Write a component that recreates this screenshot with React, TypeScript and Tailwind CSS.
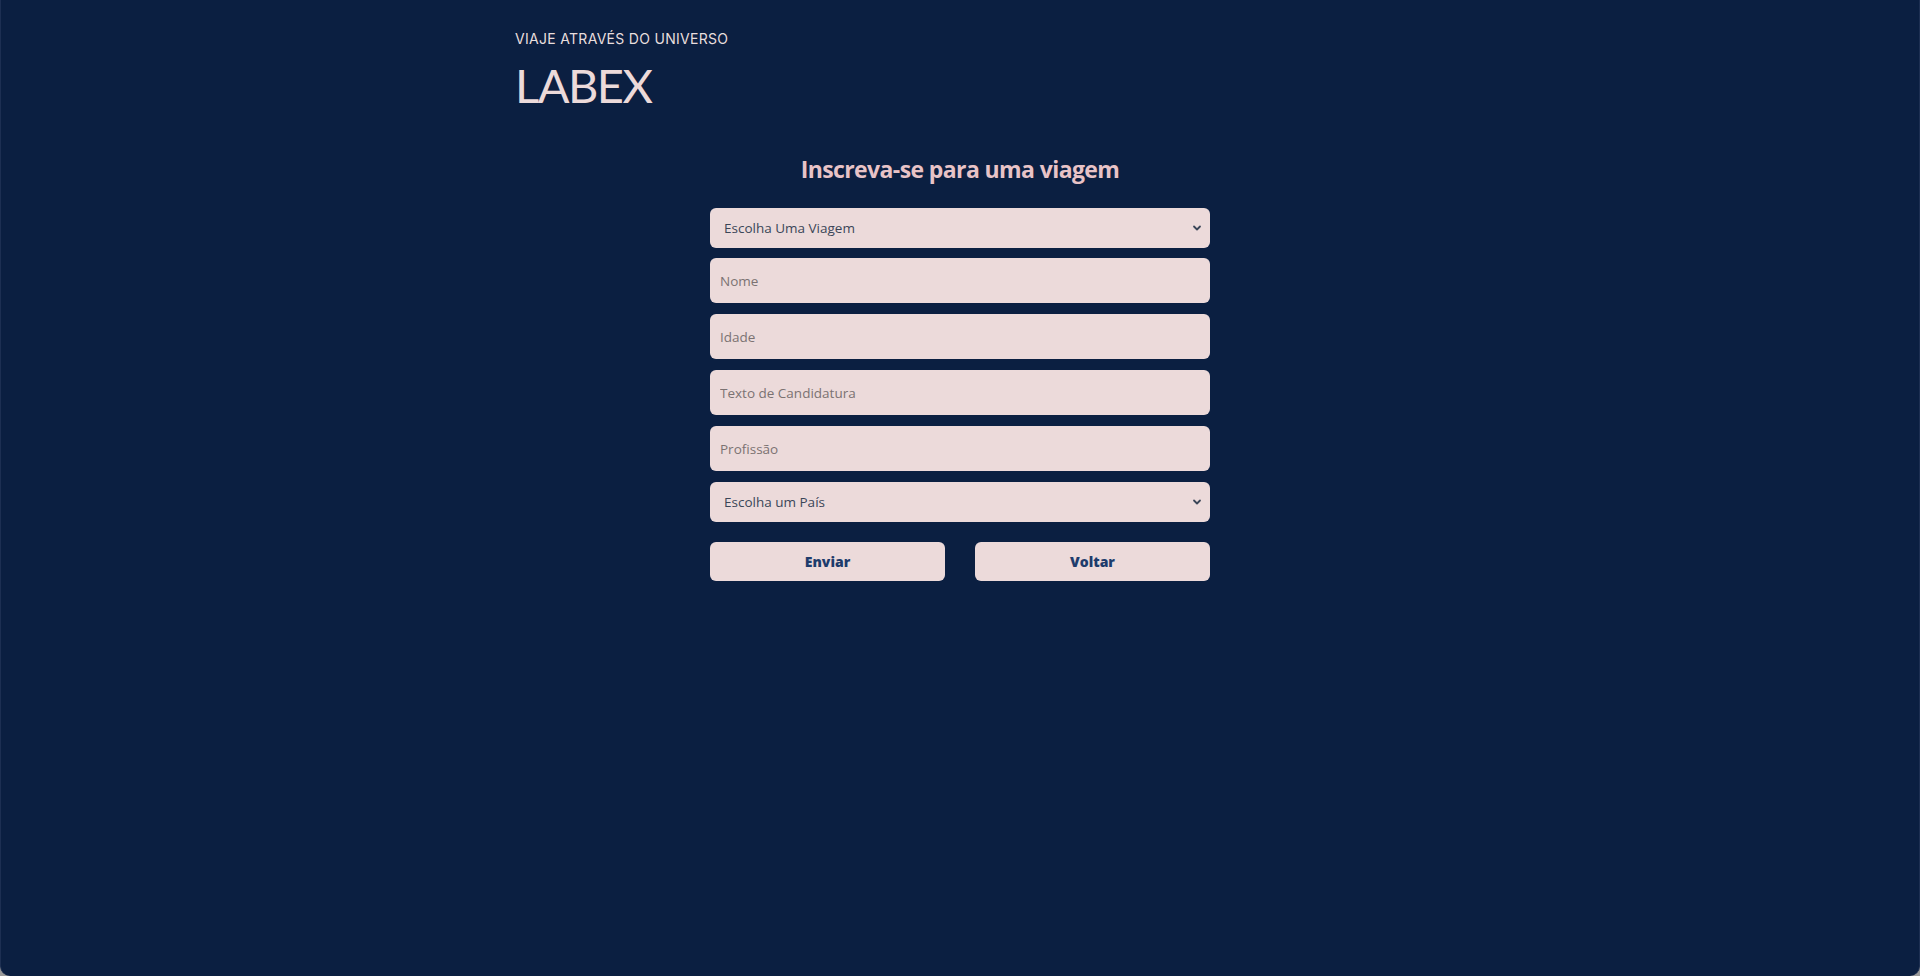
import React from "react";

function Chevron() {
  return (
    <svg
      className="pointer-events-none absolute right-[8px] top-1/2 -translate-y-1/2"
      width="10"
      height="10"
      viewBox="0 0 10 10"
      fill="none"
    >
      <path d="M2 3.5 L5 6.5 L8 3.5" stroke="#3b4658" strokeWidth="1.8" strokeLinecap="round" strokeLinejoin="round" />
    </svg>
  );
}

function Select({ label }: { label: string }) {
  return (
    <div className="relative h-[40px] w-full">
      <select
        defaultValue=""
        className="h-full w-full appearance-none rounded-[6px] bg-[#ecdada] pl-[14px] pr-8 text-[13.5px] text-[#3b4658] outline-none"
        style={{ fontFamily: '"Open Sans", "Noto Sans", sans-serif' }}
      >
        <option value="">{label}</option>
      </select>
      <Chevron />
    </div>
  );
}

function Input({ placeholder }: { placeholder: string }) {
  return (
    <input
      placeholder={placeholder}
      className="h-[45px] w-full rounded-[6px] bg-[#ecdada] px-[10px] text-[13.5px] text-[#3b4658] outline-none placeholder:text-[#7b7272]"
      style={{ fontFamily: '"Open Sans", "Noto Sans", sans-serif' }}
    />
  );
}

export default function App() {
  return (
    <div className="min-h-[976px] w-full bg-[#9a9a9a]">
      <div className="min-h-[976px] w-full rounded-b-[10px] border-x border-[#1d2f52] bg-[#0b1f41]">
        <header className="mx-auto w-[890px] pt-[30px]">
          <p
            className="text-[14px] leading-[18px] tracking-[0.3px] text-[#e8dede]"
            style={{ fontFamily: 'Inter, "Noto Sans", sans-serif' }}
          >
            VIAJE ATRAVÉS DO UNIVERSO
          </p>
          <h1
            className="mt-[12px] text-[47px] leading-[50px] tracking-[-1.5px] text-[#ecdada]"
            style={{ fontFamily: 'Lato, "Noto Sans", sans-serif' }}
          >
            LABEX
          </h1>
        </header>
        <main className="mx-auto flex w-[500px] flex-col pt-[44px]">
          <h2
            className="text-center text-[23px] font-bold leading-[30px] tracking-[-0.6px] text-[#e8c3c7]"
            style={{ fontFamily: '"Open Sans", "Noto Sans", sans-serif' }}
          >
            Inscreva-se para uma viagem
          </h2>
          <div className="mt-[24px] flex flex-col">
            <Select label="Escolha Uma Viagem" />
            <div className="mt-[10px] flex flex-col gap-[11px]">
              <Input placeholder="Nome" />
              <Input placeholder="Idade" />
              <Input placeholder="Texto de Candidatura" />
              <Input placeholder="Profissão" />
            </div>
            <div className="mt-[11px]">
              <Select label="Escolha um País" />
            </div>
            <div
              className="mt-[20px] flex justify-between"
              style={{ fontFamily: '"Open Sans", "Noto Sans", sans-serif' }}
            >
              <button className="h-[39px] w-[235px] rounded-[6px] bg-[#ecdada] text-[14px] font-extrabold text-[#1e3c6c]">
                Enviar
              </button>
              <button className="h-[39px] w-[235px] rounded-[6px] bg-[#ecdada] text-[14px] font-extrabold text-[#1e3c6c]">
                Voltar
              </button>
            </div>
          </div>
        </main>
      </div>
    </div>
  );
}
